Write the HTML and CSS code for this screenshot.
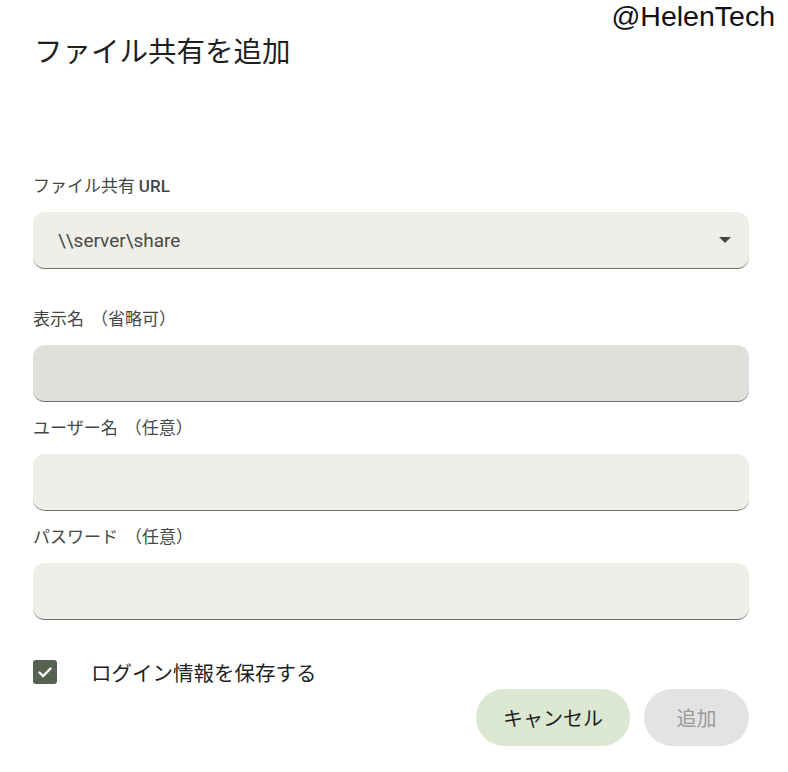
FILE: index.html
```html
<!DOCTYPE html>
<html lang="ja">
<head>
<meta charset="utf-8">
<title>ファイル共有を追加</title>
<link rel="stylesheet" href="styles.css">
</head>
<body>
<div class="watermark">@HelenTech</div>
<main class="dialog">
  <h1 class="title">ファイル共有を追加</h1>

  <div class="group group-first">
    <label class="label">ファイル共有 <span class="latin">URL</span></label>
    <div class="field select">
      <span class="value">\\server\share</span>
      <svg class="arrow" width="12" height="6" viewBox="0 0 12 6"><polygon points="0,0 12,0 6,6" fill="#474747"/></svg>
    </div>
  </div>

  <div class="group">
    <label class="label">表示名<span class="paren">（</span>省略可）</label>
    <div class="field hover"></div>
  </div>

  <div class="group">
    <label class="label">ユーザー名<span class="paren">（</span>任意）</label>
    <div class="field"></div>
  </div>

  <div class="group">
    <label class="label">パスワード<span class="paren">（</span>任意）</label>
    <div class="field"></div>
  </div>

  <div class="check-row">
    <span class="checkbox">
      <svg width="24" height="24" viewBox="0 0 24 24"><path d="M6.5 12.5l3.6 3.6 7.4-7.6" fill="none" stroke="#fff" stroke-width="2.4" stroke-linecap="round" stroke-linejoin="round"/></svg>
    </span>
    <span class="check-label">ログイン情報を保存する</span>
  </div>

  <div class="actions">
    <button class="btn btn-cancel">キャンセル</button>
    <button class="btn btn-add" disabled>追加</button>
  </div>
</main>
</body>
</html>
```

FILE: styles.css
```css
html, body {
  margin: 0;
  padding: 0;
  background: #ffffff;
}

body {
  font-family: "Noto Sans CJK JP", "Roboto", sans-serif;
  color: #1f1f1f;
  width: 788px;
  height: 772px;
  overflow: hidden;
}

.watermark {
  position: absolute;
  top: -1px;
  right: 13px;
  font-family: "Liberation Sans", "Noto Sans", sans-serif;
  font-size: 28.5px;
  line-height: 34px;
  color: #111;
}

.dialog {
  padding: 32px 39px 0 33px;
  display: flex;
  flex-direction: column;
}

.title {
  margin: 0 0 0 1px;
  font-family: "Noto Sans CJK JP", sans-serif;
  font-weight: 400;
  font-size: 28.5px;
  line-height: 36px;
  color: #1f1f1f;
}

.group {
  display: flex;
  flex-direction: column;
  gap: 17px;
  margin-bottom: 15px;
}

.group-first {
  margin-top: 107px;
  margin-bottom: 39px;
}

.label {
  display: block;
  height: 20px;
  font-family: "Noto Sans CJK JP", sans-serif;
  font-size: 17px;
  line-height: 20px;
  color: #444746;
}

.paren {
  margin-left: 7px;
}

.latin {
  font-family: "Roboto", sans-serif;
  font-weight: 500;
  font-size: 17px;
  line-height: 1;
}

.field {
  height: 56px;
  background: #efeee9;
  border-radius: 12px;
  border-bottom: 1px solid #6f706c;
  box-sizing: content-box;
  display: flex;
  align-items: center;
  padding: 0 18px 0 25px;
}

.field.hover {
  background: #e0dfdb;
}

.select {
  justify-content: space-between;
}

.value {
  font-family: "Roboto", sans-serif;
  font-size: 19px;
  color: #4a4a48;
}

.check-row {
  display: flex;
  align-items: center;
  gap: 34px;
  margin-top: 25px;
}

.checkbox {
  width: 24px;
  height: 24px;
  border-radius: 3px;
  background: #57614f;
  display: flex;
}

.check-label {
  font-family: "Noto Sans CJK JP", sans-serif;
  font-size: 20.5px;
  line-height: 24px;
  color: #1f1f1f;
}

.actions {
  display: flex;
  justify-content: flex-end;
  gap: 14px;
  margin-top: 5px;
}

.btn {
  height: 57px;
  border: none;
  border-radius: 29px;
  font-family: "Noto Sans CJK JP", sans-serif;
  font-size: 20px;
  padding: 0 26px;
}

.btn-cancel {
  background: #dbe7d1;
  color: #1f1f1f;
  width: 154px;
}

.btn-add {
  background: #e3e3e3;
  color: #9b9b9b;
  width: 105px;
}
```
